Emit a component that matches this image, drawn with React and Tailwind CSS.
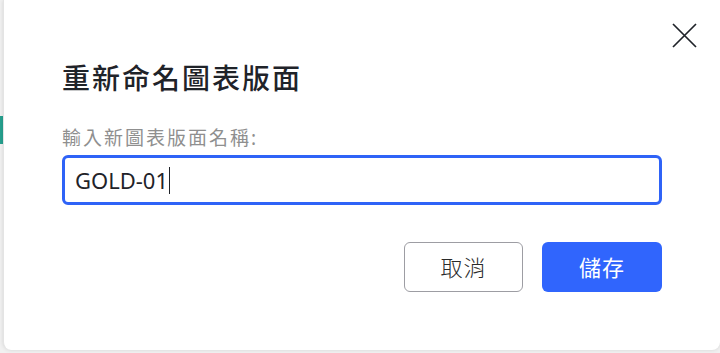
const font = { fontFamily: '"Noto Sans", "Noto Sans CJK TC", sans-serif' };

function CloseIcon() {
  return (
    <svg width="25" height="25" viewBox="0 0 25 25" fill="none" stroke="currentColor" strokeWidth="1.7" strokeLinecap="butt">
      <path d="M1 1L24 24M24 1L1 24" />
    </svg>
  );
}

function RenameDialog() {
  return (
    <div className="relative ml-[3px] h-[350px] w-[717px] rounded-b-lg border-l border-[#e4e4e4] bg-white pl-[58px] shadow-[0_0_4px_rgba(0,0,0,0.12)]">
      <button className="absolute right-[23px] top-[23px] text-[#1f2329]">
        <CloseIcon />
      </button>
      <div className="w-[600px] pt-[60px]">
        <h2 className="text-[28px] font-medium leading-[36px] tracking-[2px] text-[#1f2329]">重新命名圖表版面</h2>
        <label className="mt-[29px] block text-[19px] leading-[26px] tracking-[2px] text-[#8f8f8f]">輸入新圖表版面名稱:</label>
        <div className="mt-[4px] flex h-[50px] w-[600px] items-center rounded-md border-[3px] border-[#2f63f7] px-[10px]">
          <span className="text-[22px] text-[#1f2329]">GOLD-01</span>
          <span className="ml-[1px] h-[27px] w-px bg-[#1f2329]" />
        </div>
        <div className="mt-[37px] flex justify-end gap-[19px]">
          <button className="h-[50px] w-[119px] rounded-md border border-[#9d9da3] text-[22px] font-light tracking-[1px] text-[#2a2a2a]">取消</button>
          <button className="h-[50px] w-[120px] rounded-md bg-[#3065fd] text-[22px] tracking-[1px] text-white">儲存</button>
        </div>
      </div>
    </div>
  );
}

export default function App() {
  return (
    <div className="relative h-[353px] w-[720px] overflow-hidden bg-[#f1f1f1]" style={font}>
      <div className="absolute left-0 top-[116px] h-[28px] w-[3px] bg-[#26a08e]" />
      <RenameDialog />
    </div>
  );
}
